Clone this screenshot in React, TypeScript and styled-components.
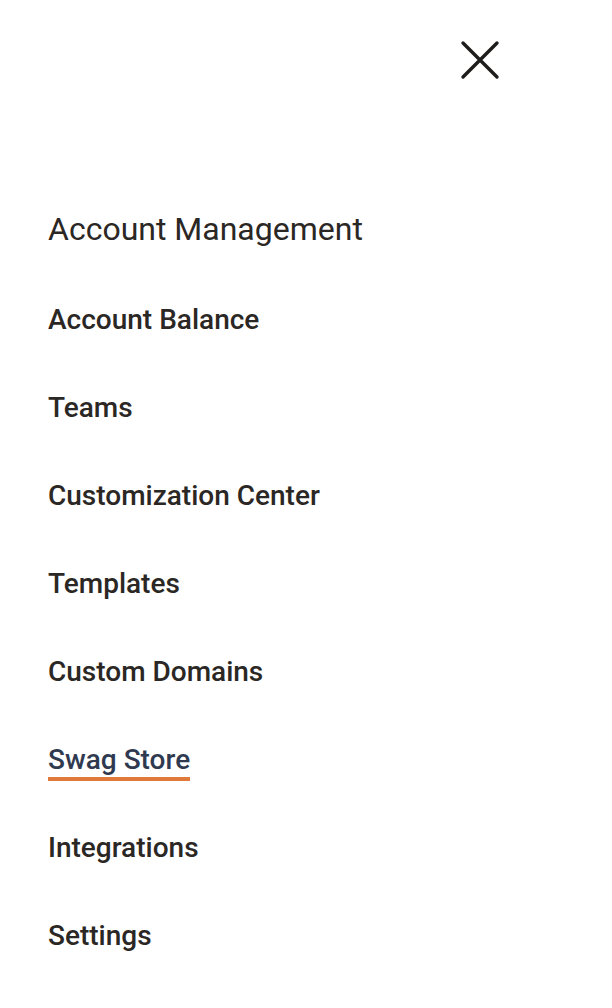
import React from "react";
import styled, { createGlobalStyle } from "styled-components";

const GlobalStyle = createGlobalStyle`
  html, body {
    margin: 0;
    padding: 0;
    background: #ffffff;
    font-family: Roboto, "Liberation Sans", sans-serif;
  }
`;

const menuItems = [
  { label: "Account Balance" },
  { label: "Teams" },
  { label: "Customization Center" },
  { label: "Templates" },
  { label: "Custom Domains" },
  { label: "Swag Store", active: true },
  { label: "Integrations" },
  { label: "Settings" },
];

const App: React.FC = () => {
  return (
    <>
      <GlobalStyle />
      <Drawer>
        <TopBar>
          <CloseButton aria-label="Close">
            <svg width="40" height="40" viewBox="0 0 40 40">
              <path d="M3 3 L37 37 M37 3 L3 37" stroke="#1f1d1b" strokeWidth="3.4" strokeLinecap="round" />
            </svg>
          </CloseButton>
        </TopBar>
        <Heading>Account Management</Heading>
        <MenuList>
          {menuItems.map((item) => (
            <MenuItem key={item.label}>
              <MenuLink $active={item.active}>{item.label}</MenuLink>
            </MenuItem>
          ))}
        </MenuList>
      </Drawer>
    </>
  );
};

export default App;

const Drawer = styled.div`
  width: 612px;
  min-height: 1008px;
  box-sizing: border-box;
  padding: 0 0 0 48px;
  display: flex;
  flex-direction: column;
`;

const TopBar = styled.div`
  display: flex;
  justify-content: flex-end;
  padding: 40px 112px 0 0;
`;

const CloseButton = styled.button`
  border: none;
  background: none;
  padding: 0;
  width: 40px;
  height: 40px;
  cursor: pointer;
  display: flex;
`;

const Heading = styled.h2`
  margin: 129px 0 0 0;
  font-size: 32px;
  font-weight: 400;
  line-height: 40px;
  color: #2b2724;
`;

const MenuList = styled.ul`
  list-style: none;
  margin: 53px 0 0 0;
  padding: 0;
  display: flex;
  flex-direction: column;
  gap: 52px;
`;

const MenuItem = styled.li`
  height: 36px;
  display: flex;
  align-items: center;
`;

const MenuLink = styled.a<{ $active?: boolean }>`
  font-size: 28px;
  font-weight: 500;
  line-height: 36px;
  color: ${(p) => (p.$active ? "#2f3a50" : "#2b2724")};
  text-decoration: none;
  cursor: pointer;
  position: relative;
  ${(p) =>
    p.$active &&
    `
    &::after {
      content: "";
      position: absolute;
      left: 0;
      right: 0;
      bottom: -3px;
      height: 4px;
      background: #e07a3a;
    }
  `}
`;
